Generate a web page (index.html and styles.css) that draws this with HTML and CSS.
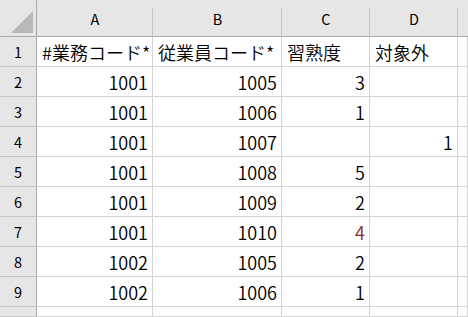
FILE: index.html
```html
<!DOCTYPE html>
<html lang="ja">
<head>
<meta charset="utf-8">
<title>Sheet</title>
<link rel="stylesheet" href="styles.css">
</head>
<body>
<div class="sheet">
  <div class="corner"><span class="tri"></span></div>
  <div class="ch">A</div>
  <div class="ch">B</div>
  <div class="ch">C</div>
  <div class="ch">D</div>
  <div class="ch last"></div>

  <div class="rh">1</div>
  <div class="c">#業務コード*</div>
  <div class="c">従業員コード*</div>
  <div class="c">習熟度</div>
  <div class="c">対象外</div>
  <div class="c"></div>

  <div class="rh">2</div>
  <div class="c n">1001</div>
  <div class="c n">1005</div>
  <div class="c n">3</div>
  <div class="c"></div>
  <div class="c"></div>

  <div class="rh">3</div>
  <div class="c n">1001</div>
  <div class="c n">1006</div>
  <div class="c n">1</div>
  <div class="c"></div>
  <div class="c"></div>

  <div class="rh">4</div>
  <div class="c n">1001</div>
  <div class="c n">1007</div>
  <div class="c n"></div>
  <div class="c n">1</div>
  <div class="c"></div>

  <div class="rh">5</div>
  <div class="c n">1001</div>
  <div class="c n">1008</div>
  <div class="c n">5</div>
  <div class="c"></div>
  <div class="c"></div>

  <div class="rh">6</div>
  <div class="c n">1001</div>
  <div class="c n">1009</div>
  <div class="c n">2</div>
  <div class="c"></div>
  <div class="c"></div>

  <div class="rh">7</div>
  <div class="c n">1001</div>
  <div class="c n">1010</div>
  <div class="c n red">4</div>
  <div class="c"></div>
  <div class="c"></div>

  <div class="rh">8</div>
  <div class="c n">1002</div>
  <div class="c n">1005</div>
  <div class="c n">2</div>
  <div class="c"></div>
  <div class="c"></div>

  <div class="rh">9</div>
  <div class="c n">1002</div>
  <div class="c n">1006</div>
  <div class="c n">1</div>
  <div class="c"></div>
  <div class="c"></div>

  <div class="rh"></div>
  <div class="c"></div>
  <div class="c"></div>
  <div class="c"></div>
  <div class="c"></div>
  <div class="c"></div>
</div>
</body>
</html>
```

FILE: styles.css
```css
html, body {
  margin: 0;
  padding: 0;
  background: #ffffff;
  overflow: hidden;
}

.sheet {
  display: grid;
  grid-template-columns: 37px 116px 129px 88px 88px 1fr;
  grid-template-rows: 37px repeat(9, 30px) 1fr;
  width: 468px;
  height: 317px;
  font-family: "Noto Sans CJK JP", "Noto Sans", sans-serif;
  color: #000;
}

.sheet > div {
  box-sizing: border-box;
  min-width: 0;
  overflow: hidden;
  white-space: nowrap;
}

.corner {
  background: #e6e6e6;
  border-right: 1px solid #a9a9a9;
  border-bottom: 1px solid #a9a9a9;
  display: flex;
  align-items: flex-end;
  justify-content: flex-end;
  padding: 0 3px 3px 0;
}

.tri {
  width: 22px;
  height: 22px;
  background: #b9b9b9;
  clip-path: polygon(100% 0, 100% 100%, 0 100%);
}

.ch {
  background-color: #e6e6e6;
  background-image: linear-gradient(#c4c4c4, #c4c4c4);
  background-repeat: no-repeat;
  background-position: right bottom;
  background-size: 1px 28px;
  border-bottom: 1px solid #a9a9a9;
  font-size: 14.5px;
  display: flex;
  align-items: center;
  justify-content: center;
  padding-top: 1px;
}

.ch.last {
  background-image: none;
}

.rh {
  background: #e6e6e6;
  border-right: 1px solid #a9a9a9;
  border-bottom: 1px solid #c8c8c8;
  font-size: 14.5px;
  display: flex;
  align-items: center;
  justify-content: center;
}

.c {
  background: #ffffff;
  border-right: 1px solid #d4d4d4;
  border-bottom: 1px solid #d4d4d4;
  font-size: 18px;
  font-weight: 350;
  display: flex;
  align-items: center;
  padding: 0 4px 0 5px;
}

.c.n {
  justify-content: flex-end;
}

.c.red {
  color: #8a2a2a;
}
```
